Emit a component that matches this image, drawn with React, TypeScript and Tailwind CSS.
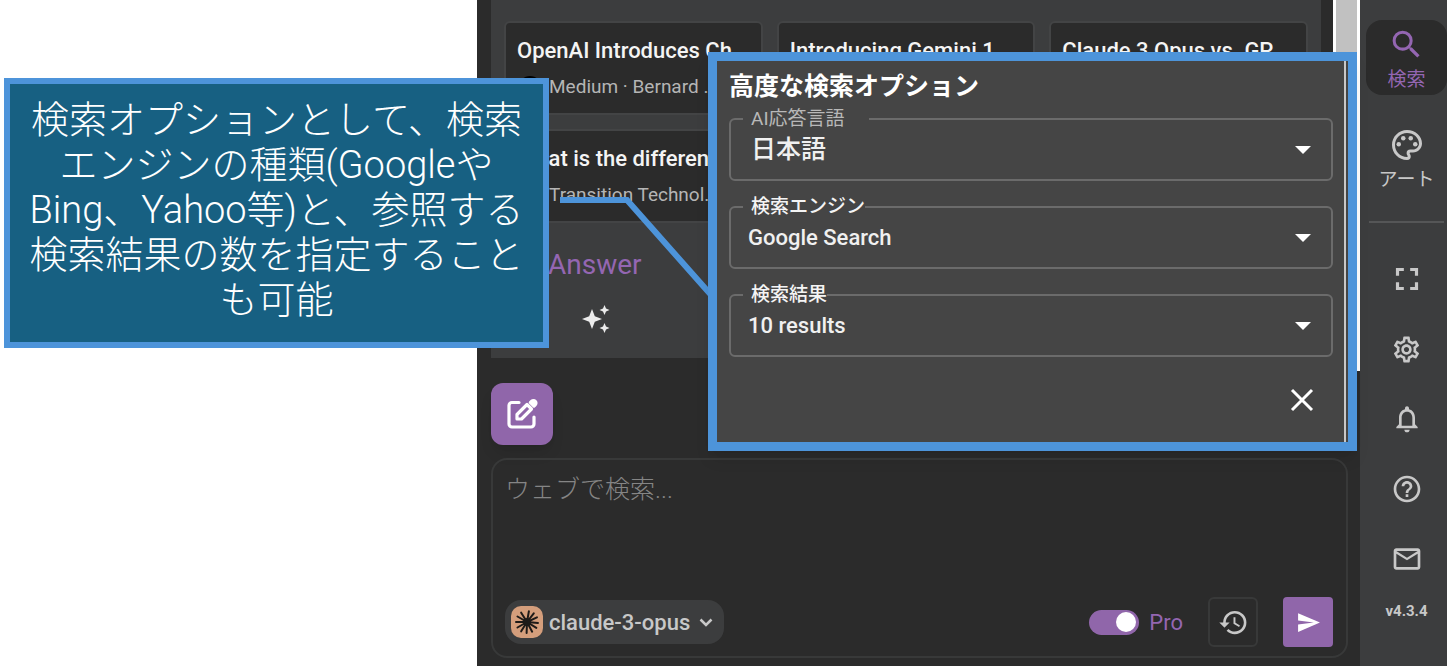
import type { ReactNode } from "react";
import {
  MdFullscreen,
  MdHelpOutline,
  MdHistory,
  MdMailOutline,
  MdNotificationsNone,
  MdOutlinePalette,
  MdOutlineSettings,
  MdSearch,
  MdSend,
} from "react-icons/md";

const results = [
  { title: "OpenAI Introduces Ch...", source: "Medium · Bernard ..." },
  { title: "Introducing Gemini 1..." },
  { title: "Claude 3 Opus vs. GP..." },
  { title: "What is the differen...", source: "Transition Technol..." },
];

const ResultCard = ({ title, source }: { title: string; source?: string }) => (
  <a
    href="#"
    className="block h-[94px] min-w-0 overflow-hidden rounded-md border-2 border-[#434445] bg-[#2b2b2b] px-[11px] pt-3.5 whitespace-nowrap"
  >
    <div className="text-[22px] leading-7 font-medium text-[#f4f4f4]">{title}</div>
    {source && (
      <div className="mt-2 flex items-center gap-2 text-[19px] leading-7 text-[#b5b5b5]">
        <span className="ml-0.5 h-[22px] w-[22px] shrink-0 rounded-full bg-black" />
        <span>{source}</span>
      </div>
    )}
  </a>
);

const SparkleIcon = () => (
  <svg viewBox="0 0 28 28" className="h-7 w-7" fill="currentColor">
    <path d="M10 4 12.800 11.200 20 14 12.800 16.800 10 24 7.200 16.800 0 14l7.200-2.800z" />
    <path d="M22.500 0 24 3.500 27.500 5 24 6.500 22.500 10 21 6.500 17.500 5 21 3.500z" />
    <path d="m22.500 18 1.500 3.500 3.500 1.500-3.500 1.500-1.500 3.500-1.500-3.500-3.500-1.500 3.500-1.500z" />
  </svg>
);

const ComposeIcon = () => (
  <svg viewBox="0 0 32 32" className="h-8 w-8" fill="none" stroke="currentColor" strokeWidth="3.200" strokeLinejoin="round">
    <path d="M13 4.500H6A3 3 0 0 0 3 7.500V26a3 3 0 0 0 3 3h19a3 3 0 0 0 3-3v-7" strokeLinecap="round" />
    <path d="M11 16.500V21h4.500L25.500 11 21 6.500z" />
    <path d="m24 4.500 1.500-1.500a2.800 2.800 0 0 1 4 0 2.800 2.800 0 0 1 0 4L28 8.500z" fill="currentColor" strokeWidth="2.500" />
  </svg>
);

const burst = [5, 32, 62, 92, 122, 150, 180, 210, 238, 280, 308, 335];

const ClaudeIcon = () => (
  <svg viewBox="0 0 32 32" className="h-8 w-8">
    <rect width="32" height="32" rx="10" fill="#d49e7c" />
    <g stroke="#1d1a18" strokeWidth="2" strokeLinecap="round">
      {burst.map((deg) => (
        <line key={deg} x1="16" y1="16" x2="27" y2="16" transform={`rotate(${deg} 16 16)`} />
      ))}
    </g>
    <circle cx="16" cy="16" r="4" fill="#1d1a18" />
  </svg>
);

const SelectField = ({
  id,
  label,
  value,
  legendClass,
  selectClass,
}: {
  id: string;
  label: string;
  value: string;
  legendClass: string;
  selectClass: string;
}) => (
  <fieldset className="relative h-[74px] rounded-md border-2 border-[#6b6b6b]">
    <legend className={`ml-3 h-6 pl-2 text-[19px] leading-6 ${legendClass}`}>
      <label htmlFor={id}>{label}</label>
    </legend>
    <select
      id={id}
      className={`block h-10 w-full appearance-none bg-transparent font-medium text-[#f0f0f0] outline-none ${selectClass}`}
    >
      <option>{value}</option>
    </select>
    <svg viewBox="0 0 16 8" className="pointer-events-none absolute top-[15px] right-5 h-2 w-4" fill="white">
      <path d="M0 0h16L8 8z" />
    </svg>
  </fieldset>
);

const RailButton = ({ label, children }: { label: string; children: ReactNode }) => (
  <button aria-label={label} className="flex h-8 w-full items-center justify-center">
    {children}
  </button>
);

const SearchOptions = () => (
  <section className="absolute top-[52px] right-[90px] left-[708px] border-[9px] border-[#4d94da] bg-[#454545] shadow-lg">
    <div className="mr-0.5 border-r-2 border-[#c8c8c8] pt-2.5 pr-[11px] pb-[26px] pl-3">
      <h2 className="text-[25px] leading-8 font-bold text-white">高度な検索オプション</h2>
      <div className="mt-1 flex flex-col gap-[14px]">
        <SelectField
          id="lang"
          label="AI応答言語"
          value="日本語"
          legendClass="pr-6 text-[#b8b8b8]"
          selectClass="pb-0.5 pl-5 text-[25px]"
        />
        <SelectField
          id="engine"
          label="検索エンジン"
          value="Google Search"
          legendClass="font-medium text-[#f4f4f4]"
          selectClass="pb-1 pl-[17px] text-[22px]"
        />
        <SelectField
          id="count"
          label="検索結果"
          value="10 results"
          legendClass="font-medium text-[#f4f4f4]"
          selectClass="pb-1 pl-[17px] text-[22px]"
        />
      </div>
      <div className="mt-[27px] flex justify-end pr-[15px]">
        <button aria-label="閉じる" className="flex h-8 w-8 items-center justify-center text-white">
          <svg viewBox="0 0 24 24" className="h-6 w-6" stroke="currentColor" strokeWidth="3">
            <path d="M2 2l20 20M22 2L2 22" />
          </svg>
        </button>
      </div>
    </div>
  </section>
);

const Callout = () => (
  <div className="absolute top-[78px] left-1 flex h-[270px] w-[545px] flex-col border-[6px] border-[#4d94da] bg-[#176082] pt-3.5 text-center text-[38px] leading-[45px] font-light whitespace-nowrap text-white">
    <p>
      検索オプションとして、検索
      <br />
      エンジンの種類(Googleや
      <br />
      Bing、Yahoo等)と、参照する
      <br />
      検索結果の数を指定すること
      <br />
      も可能
    </p>
  </div>
);

const App = () => {
  return (
    <div className="relative flex min-h-screen overflow-hidden bg-white pl-[477px] font-[Roboto,'Noto_Sans_CJK_JP',sans-serif]">
      <main className="flex min-w-0 flex-1 flex-col bg-[#2b2b2b]">
        <div className="flex">
          <div className="mb-[13px] ml-3.5 min-w-0 flex-1 bg-[#3c3d3e] pb-[25px]">
            <div className="grid grid-cols-3 gap-3.5 px-[13px] pt-[21px]">
              {results.map((item) => (
                <ResultCard key={item.title} {...item} />
              ))}
            </div>
            <h2 className="mt-6 pl-[57px] text-[28px] leading-9 text-[#9466b2]">Answer</h2>
            <div className="mt-[22px] pl-[91px] text-[#ececec]">
              <SparkleIcon />
            </div>
          </div>
          <div className="ml-3 w-[27px] border-x-[3px] border-white bg-[#c1c1c1]" />
        </div>

        <button
          aria-label="新しいチャット"
          className="mt-3 ml-3.5 flex h-[62px] w-[62px] items-center justify-center rounded-xl bg-[#9066aa] text-white shadow-lg"
        >
          <ComposeIcon />
        </button>

        <div className="mt-[13px] mr-3 mb-2 ml-3.5 flex flex-1 flex-col rounded-2xl border-2 border-[#383939]">
          <textarea
            aria-label="検索"
            placeholder="ウェブで検索..."
            className="w-full flex-1 resize-none bg-transparent px-3 pt-3.5 text-[25px] leading-8 text-white outline-none placeholder:font-light placeholder:text-[#858585]"
          />
          <div className="flex items-center pr-[13px] pb-[9px] pl-3">
            <button className="flex h-11 items-center rounded-2xl bg-[#3c3d3e] pr-2.5 pl-1.5 text-[22px] font-medium text-[#c8c8c8]">
              <ClaudeIcon />
              <span className="ml-1.5">claude-3-opus</span>
              <svg viewBox="0 0 16 16" className="ml-2 h-4 w-4" fill="none" stroke="currentColor" strokeWidth="2.500">
                <path d="M2.500 5.500 8 11l5.500-5.500" />
              </svg>
            </button>
            <label className="ml-auto flex items-center gap-2.5 text-[22px] text-[#9466b2]">
              <input type="checkbox" defaultChecked className="peer sr-only" />
              <span className="flex h-[25px] w-[50px] items-center justify-end rounded-full bg-[#9066aa] pr-[3px]">
                <span className="h-5 w-5 rounded-full bg-white" />
              </span>
              Pro
            </label>
            <button
              aria-label="履歴"
              className="ml-[25px] flex h-[50px] w-[50px] items-center justify-center rounded-md border-2 border-[#383939] text-[#c8c8c8]"
            >
              <MdHistory size={31} />
            </button>
            <button
              aria-label="送信"
              className="ml-[25px] flex h-[50px] w-[50px] items-center justify-center rounded bg-[#9066aa] text-white"
            >
              <MdSend size={25} />
            </button>
          </div>
        </div>
      </main>

      <nav className="flex w-[87px] shrink-0 flex-col items-center bg-[#3c3d3e] pt-5 pl-1.5 text-[#c8c8c8]">
        <button className="flex h-[75px] w-full flex-col items-center rounded-2xl bg-[#2b2b2b] pt-1.5 text-[19px] leading-7 text-[#9466b2]">
          <MdSearch size={37} />
          <span className="mt-[3px]">検索</span>
        </button>
        <button className="mt-8 flex w-full flex-col items-center text-[19px] leading-7">
          <MdOutlinePalette size={36} />
          <span className="mt-[3px]">アート</span>
        </button>
        <hr className="mt-[27px] w-[75px] border-t-2 border-[#555657]" />
        <div className="mt-10 flex w-full flex-col gap-[38px]">
          <RailButton label="全画面">
            <MdFullscreen size={38} />
          </RailButton>
          <RailButton label="設定">
            <MdOutlineSettings size={31} />
          </RailButton>
          <RailButton label="通知">
            <MdNotificationsNone size={32} />
          </RailButton>
          <RailButton label="ヘルプ">
            <MdHelpOutline size={32} />
          </RailButton>
          <RailButton label="メール">
            <MdMailOutline size={32} />
          </RailButton>
        </div>
        <span className="mt-6 text-[15px] leading-6 font-bold">v4.3.4</span>
      </nav>

      <svg className="pointer-events-none absolute top-0 left-0 h-full w-full" fill="none" stroke="#4d94da" strokeWidth="6">
        <path d="M560 200H627L712 296" />
      </svg>
      <Callout />
      <SearchOptions />
    </div>
  );
};

export default App;
